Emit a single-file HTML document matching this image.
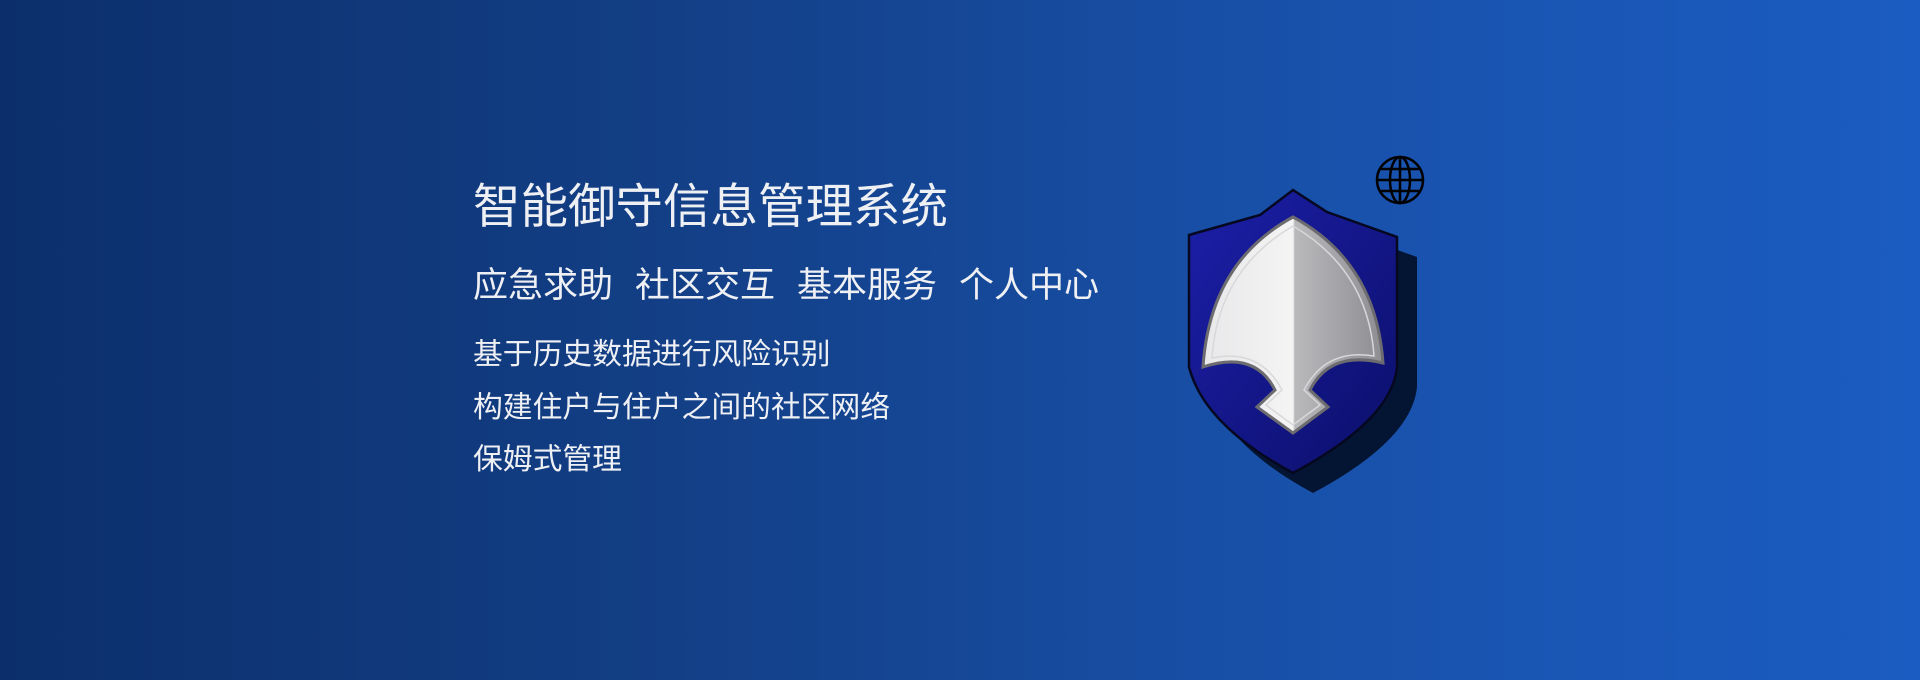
<!DOCTYPE html>
<html><head><meta charset="utf-8"><style>
html,body{margin:0;padding:0;width:1920px;height:680px;overflow:hidden}
body{background:linear-gradient(90deg,#0c2f6b 0%,#133f86 35%,#1850a8 65%,#1b5cc2 100%);position:relative;font-family:"Liberation Sans","Noto Sans CJK SC",sans-serif;color:#eef0f4}
.t{position:absolute;left:473px;white-space:nowrap;line-height:1}
.t1{top:184px;font-size:47.5px;letter-spacing:0}
.t2{top:268px;font-size:35px}
.t2 span{margin-right:22px}
.t3{font-size:29.8px}
svg{position:absolute;left:0;top:0}
</style></head><body>
<div class="t t1">智能御守信息管理系统</div>
<div class="t t2"><span>应急求助</span><span>社区交互</span><span>基本服务</span>个人中心</div>
<div class="t t3" style="top:340px">基于历史数据进行风险识别</div>
<div class="t t3" style="top:393px">构建住户与住户之间的社区网络</div>
<div class="t t3" style="top:445px">保姆式管理</div>
<svg width="1920" height="680" viewBox="0 0 1920 680">
<defs>
<linearGradient id="sh" x1="0" y1="0" x2="1" y2="1"><stop offset="0" stop-color="#1c1fa8"/><stop offset="1" stop-color="#0b0f6a"/></linearGradient>
<linearGradient id="sl" x1="0" y1="0" x2="1" y2="0"><stop offset="0" stop-color="#e8e8ea"/><stop offset="0.5" stop-color="#f4f4f4"/><stop offset="0.51" stop-color="#b9b9bc"/><stop offset="1" stop-color="#8e8e92"/></linearGradient>
</defs>
<path d="M1209,255 L1280,235 L1313,210 L1347,232 L1417,257 L1417,387 Q1412,440 1313,493 Q1224,445 1209,387 Z" fill="#041533"/>
<path d="M1189,235 L1260,215 L1293,190 L1327,212 L1397,237 L1397,367 Q1392,420 1293,473 Q1204,425 1189,367 Z" fill="url(#sh)" stroke="#050820" stroke-width="2.5"/>
<path d="M1293,217 Q1210,262 1203,367 Q1255,350 1275,390 L1257,407 L1293,433 L1328,407 L1310,390 Q1330,350 1383,363 Q1376,262 1293,217 Z" fill="url(#sl)" stroke="#6c6c70" stroke-width="3"/>
<path d="M1293,226 Q1218,270 1212,358 Q1260,348 1282,390 L1266,405 L1293,425 L1320,405 L1304,390 Q1326,348 1374,356 Q1368,270 1293,226 Z" fill="none" stroke="#d8d8da" stroke-width="1.5"/>
<g fill="none" stroke="#000" stroke-width="2.5">
<circle cx="1400" cy="180" r="23"/>
<ellipse cx="1400" cy="180" rx="10" ry="23"/>
<line x1="1400" y1="157" x2="1400" y2="203"/>
<line x1="1377" y1="180" x2="1423" y2="180"/>
<line x1="1381" y1="169" x2="1419" y2="169"/>
<line x1="1381" y1="191" x2="1419" y2="191"/>
</g>
</svg>
</body></html>
